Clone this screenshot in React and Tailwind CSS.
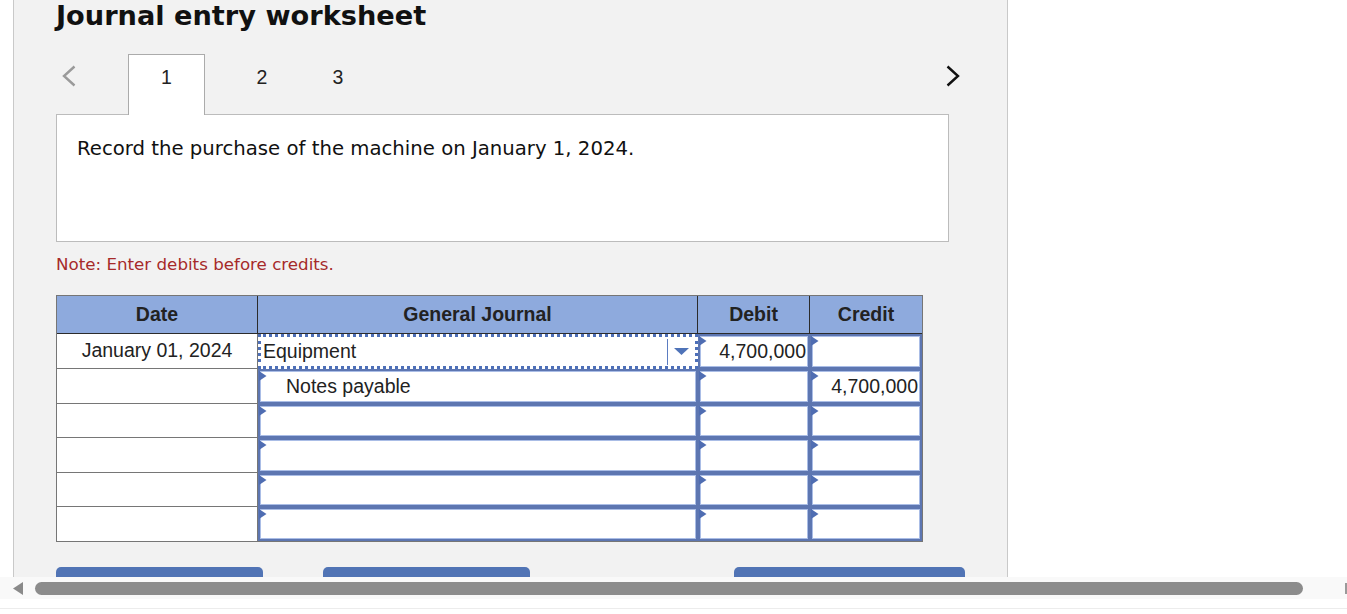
import React from "react";

const verdana = { fontFamily: '"DejaVu Sans", Verdana, sans-serif' };
const arial = { fontFamily: '"Liberation Sans", Arial, sans-serif' };

function Flag() {
    return (
        <svg className="absolute left-[1px] top-[2px]" width="8" height="11" viewBox="0 0 8 11">
            <polygon points="0,0 7.5,5 0,10" fill="#4f6db2" />
        </svg>
    );
}

function InputCell({ w, children, className = "" }) {
    return (
        <div className={`relative h-full bg-[#5d76b1] p-[2px] ${w}`}>
            <div className={`h-full bg-white border border-[#aabde6] flex items-center text-[19.5px] text-[#222] ${className}`}>
                {children}
            </div>
            <Flag />
        </div>
    );
}

function DropdownCell() {
    return (
        <div className="h-full w-[440px] bg-white border-[3px] border-dotted border-[#4d6fb8] flex items-center text-[19.5px] text-[#222]">
            <span className="pl-[2px] flex-1">Equipment</span>
            <div className="h-[26px] w-px bg-[#5b7cc1]" />
            <div className="w-[27px] flex justify-center">
                <svg width="15" height="7" viewBox="0 0 15 7">
                    <polygon points="0,0 15,0 7.5,7" fill="#4f73b8" />
                </svg>
            </div>
        </div>
    );
}

const rows = [
    { h: "h-[35px]", date: "January 01, 2024", account: "Equipment", debit: "4,700,000", credit: "" },
    { h: "h-[35px]", date: "", account: "Notes payable", debit: "", credit: "4,700,000", indent: true },
    { h: "h-[34px]", date: "", account: "", debit: "", credit: "" },
    { h: "h-[35px]", date: "", account: "", debit: "", credit: "" },
    { h: "h-[34px]", date: "", account: "", debit: "", credit: "" },
    { h: "h-[34px]", date: "", account: "", debit: "", credit: "" },
];

function JournalTable() {
    return (
        <div className="mt-[21px] w-[867px] border border-[#767676]" style={arial}>
            <div className="flex h-[38px] bg-[#8eaadd] border-b border-[#2b2b2b] text-[19.5px] font-bold text-[#222]">
                <div className="w-[201px] border-r border-[#2b2b2b] flex items-center justify-center">Date</div>
                <div className="w-[440px] border-r border-[#2b2b2b] flex items-center justify-center">General Journal</div>
                <div className="w-[112px] border-r border-[#2b2b2b] flex items-center justify-center">Debit</div>
                <div className="w-[112px] flex items-center justify-center">Credit</div>
            </div>
            {rows.map((r, i) => (
                <div key={i} className={`flex ${r.h}`}>
                    <div className={`w-[201px] bg-white border-r border-[#767676] flex items-center justify-center text-[19.5px] text-[#222] ${i < rows.length - 1 ? "border-b" : ""}`}>
                        {r.date}
                    </div>
                    {i === 0 ? (
                        <DropdownCell />
                    ) : (
                        <InputCell w="w-[440px]" className={r.indent ? "pl-[25px]" : "pl-[3px]"}>
                            {r.account}
                        </InputCell>
                    )}
                    <InputCell w="w-[112px]" className="justify-end pr-[1px]">{r.debit}</InputCell>
                    <InputCell w="w-[112px]" className="justify-end pr-[1px]">{r.credit}</InputCell>
                </div>
            ))}
        </div>
    );
}

function Tabs() {
    return (
        <div className="flex h-[60px] w-[904px] items-start" style={arial}>
            <div className="w-[72px] pt-[11px] pl-[6px]">
                <svg width="14" height="22" viewBox="0 0 14 22">
                    <polyline points="12.5,1.5 2,11 12.5,20.5" fill="none" stroke="#9a9a9a" strokeWidth="2.4" />
                </svg>
            </div>
            <div className="relative z-10 w-[77px] h-[61px] border border-b-0 border-[#ababab] bg-white text-center pt-[11px] text-[19.5px] leading-[22px] text-[#222]">
                1
            </div>
            <div className="w-[19px]" />
            <div className="w-[76px] text-center pt-[12px] text-[19.5px] leading-[22px] text-[#222]">2</div>
            <div className="w-[76px] text-center pt-[12px] text-[19.5px] leading-[22px] text-[#222]">3</div>
            <div className="flex-1" />
            <div className="pt-[11px]">
                <svg width="14" height="22" viewBox="0 0 14 22">
                    <polyline points="1.5,1.5 12,11 1.5,20.5" fill="none" stroke="#111" strokeWidth="2.4" />
                </svg>
            </div>
        </div>
    );
}

function Scrollbar() {
    return (
        <>
            <div className="h-[22px] bg-[#f9f9f9] flex items-center">
                <div className="w-[13px]" />
                <svg width="11" height="13" viewBox="0 0 11 13">
                    <polygon points="10,0 10,13 0,6.5" fill="#8a8a8a" />
                </svg>
                <div className="w-[11px]" />
                <div className="w-[1268px] h-[13px] rounded-full bg-[#8c8c8c]" />
                <div className="flex-1" />
                <div className="w-[2px] h-[11px] bg-[#9a9a9a]" />
            </div>
            <div className="h-[9px] bg-white" />
            <div className="h-px bg-[#ececec]" />
        </>
    );
}

export default function App() {
    return (
        <div className="h-[614px] w-[1347px] overflow-hidden bg-white">
            <div className="h-[577px] flex">
                <div className="ml-[13px] w-[995px] h-full overflow-hidden border-x border-[#c9c9c9] bg-[#f2f2f2] pl-[42px]">
                    <div className="h-[54px] pt-[1px]" style={verdana}>
                        <h1 className="text-[27.2px] leading-[30px] font-bold text-[#111]">Journal entry worksheet</h1>
                    </div>
                    <Tabs />
                    <div className="w-[893px] h-[128px] border border-[#bcbcbc] bg-white pl-[20px] pt-[23px] text-[19.7px] leading-[22px] text-[#111]" style={verdana}>
                        Record the purchase of the machine on January 1, 2024.
                    </div>
                    <div className="mt-[12px] text-[16.7px] leading-[20px] text-[#a62a2a]" style={verdana}>
                        Note: Enter debits before credits.
                    </div>
                    <JournalTable />
                    <div className="mt-[25px] flex">
                        <div className="w-[207px] h-[20px] rounded-[5px] bg-[#5174b5]" />
                        <div className="ml-[60px] w-[207px] h-[20px] rounded-[5px] bg-[#5174b5]" />
                        <div className="ml-[204px] w-[231px] h-[20px] rounded-[5px] bg-[#5174b5]" />
                    </div>
                </div>
            </div>
            <Scrollbar />
        </div>
    );
}
